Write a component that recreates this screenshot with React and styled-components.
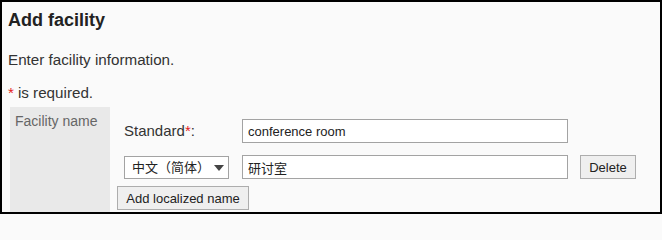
import React from "react";
import styled, { createGlobalStyle } from "styled-components";

const GlobalStyle = createGlobalStyle`
  body {
    margin: 0;
    font-family: "Liberation Sans", Arial, sans-serif;
    color: #333;
    background: #fafafa;
  }
`;

const Frame = styled.div`
  box-sizing: border-box;
  width: 662px;
  height: 214px;
  border: 2px solid #000;
  background: #fafafa;
  padding: 7px 6px 0 6px;
  overflow: hidden;
  display: flex;
  flex-direction: column;
`;

const Title = styled.h2`
  margin: 0;
  font-size: 18px;
  line-height: 22px;
  font-weight: bold;
  color: #222;
`;

const Text = styled.p`
  margin: ${(p) => p.$top || 0}px 0 0 0;
  font-size: 15.2px;
  line-height: 20px;
  color: #333;
`;

const Required = styled.span`
  color: #e51c1c;
  margin-right: ${(p) => (p.$space ? 4 : 0)}px;
`;

const Table = styled.div`
  display: flex;
  margin: 4px 0 0 2px;
  flex: 1;
`;

const LabelCell = styled.div`
  box-sizing: border-box;
  width: 100px;
  background: #e9e9e9;
  padding: 5px 5px 0 5px;
  font-size: 14px;
  line-height: 18px;
  color: #666;
`;

const ValueCell = styled.div`
  display: flex;
  flex-direction: column;
  padding: 12px 0 0 7px;
`;

const Row = styled.div`
  display: flex;
  align-items: center;
  padding-left: 7px;
  margin-bottom: ${(p) => p.$gap || 0}px;
`;

const FieldLabel = styled.div`
  width: 118px;
  font-size: 15px;
  line-height: 20px;
  color: #333;
`;

const TextInput = styled.input`
  box-sizing: border-box;
  width: 326px;
  height: 24px;
  border: 1px solid #a3a3a3;
  background: #fff;
  padding: 0 5px;
  font-family: "Liberation Sans", "Noto Sans CJK SC", sans-serif;
  font-size: 13px;
  color: #222;
  outline: none;
`;

const SelectWrap = styled.div`
  position: relative;
  width: 105px;
  margin-right: 13px;
`;

const Select = styled.select`
  box-sizing: border-box;
  width: 105px;
  height: 23px;
  border: 1px solid #a3a3a3;
  background: #fff;
  padding: 0 0 0 7px;
  appearance: none;
  font-family: "Liberation Sans", "Noto Sans CJK SC", sans-serif;
  font-size: 13px;
  color: #222;
  outline: none;
`;

const Arrow = styled.svg`
  position: absolute;
  right: 5px;
  top: 9px;
  pointer-events: none;
`;

const Button = styled.button`
  box-sizing: border-box;
  height: 24px;
  width: ${(p) => p.$width}px;
  margin-left: ${(p) => p.$left || 0}px;
  border: 1px solid #adadad;
  background: #efefef;
  font-family: "Liberation Sans", Arial, sans-serif;
  font-size: 13px;
  color: #222;
  padding: 0;
  cursor: pointer;
`;

export default function App() {
  return (
    <>
      <GlobalStyle />
      <Frame>
        <Title>Add facility</Title>
        <Text $top={19}>Enter facility information.</Text>
        <Text $top={13}>
          <Required $space>*</Required>is required.
        </Text>
        <Table>
          <LabelCell>Facility name</LabelCell>
          <ValueCell>
            <Row $gap={12}>
              <FieldLabel>
                Standard<Required>*</Required>:
              </FieldLabel>
              <TextInput defaultValue="conference room" />
            </Row>
            <Row $gap={7}>
              <SelectWrap>
                <Select defaultValue="zh">
                  <option value="zh">中文（简体）</option>
                  <option value="en">English</option>
                  <option value="ja">日本語</option>
                </Select>
                <Arrow width="10" height="6" viewBox="0 0 10 6">
                  <path d="M0 0 L10 0 L5 6 Z" fill="#444" />
                </Arrow>
              </SelectWrap>
              <TextInput defaultValue="研讨室" />
              <Button $width={56} $left={12}>
                Delete
              </Button>
            </Row>
            <div>
              <Button $width={132}>Add localized name</Button>
            </div>
          </ValueCell>
        </Table>
      </Frame>
    </>
  );
}
